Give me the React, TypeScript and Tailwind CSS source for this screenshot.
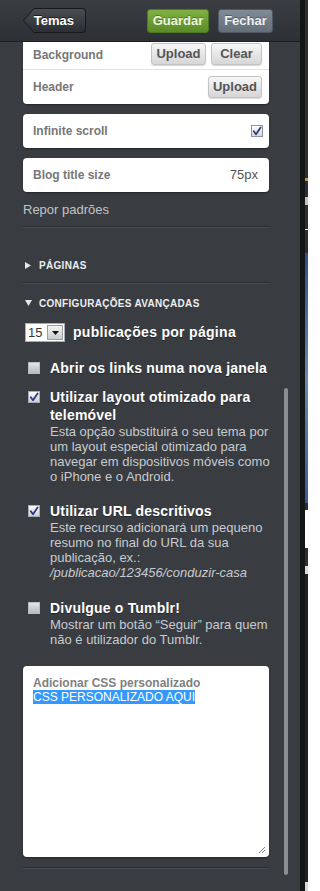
import type { ReactNode } from 'react';

// ─── Shared bits ───────────────────────────────────────────────────────────────

const FONT = "font-['Liberation_Sans',Arial,sans-serif]";

function cx(...parts: (string | false | undefined)[]) {
  return parts.filter(Boolean).join(' ');
}

function Checkbox({ checked, light }: { checked?: boolean; light?: boolean }) {
  return (
    <span
      className={cx(
        'flex h-[12px] w-[12px] shrink-0 items-center justify-center border',
        light
          ? 'border-[#8e949a] bg-gradient-to-b from-[#ffffff] to-[#d5d8dc]'
          : checked
            ? 'border-[#a7abb0] bg-gradient-to-b from-[#fdfdfd] to-[#cdd0d4]'
            : 'border-[#b9bcc0] bg-gradient-to-b from-[#e4e5e7] to-[#b8bbbf]',
      )}
    >
      {checked && (
        <svg width="10" height="10" viewBox="0 0 10 10" aria-hidden="true">
          <path
            d="M1.8 5.2 L4 8.2 L8.6 1.4"
            fill="none"
            stroke="#2d3b86"
            strokeWidth="1.8"
            strokeLinecap="round"
            strokeLinejoin="round"
          />
        </svg>
      )}
    </span>
  );
}

function GrayButton({ children, width }: { children: ReactNode; width: string }) {
  return (
    <button
      className={cx(
        'flex h-[22px] items-center justify-center rounded-[3px] border border-[#c3c3c3] bg-gradient-to-b from-[#f8f8f8] to-[#d6d6d6] text-[13px] font-bold text-[#555] shadow-[0_1px_1px_rgba(0,0,0,0.15)]',
        width,
      )}
    >
      {children}
    </button>
  );
}

function Divider({ className }: { className?: string }) {
  return <div className={cx('h-[2px] border-t border-b border-t-[#2a2d31] border-b-[#4a4e54]', className)} />;
}

function Option({
  checked,
  title,
  children,
  className,
}: {
  checked?: boolean;
  title: ReactNode;
  children?: ReactNode;
  className?: string;
}) {
  return (
    <div className={cx('flex gap-[10px] pl-[5px]', className)}>
      <div className="pt-[3px]">
        <Checkbox checked={checked} />
      </div>
      <div className="min-w-0 flex-1">
        <p className="text-[14px] font-bold leading-[18px] tracking-[0.2px] text-white [text-shadow:0_1px_0_rgba(0,0,0,0.4)]">
          {title}
        </p>
        {children && (
          <p className="whitespace-nowrap text-[13px] leading-[15px] text-[#c7cbcf]">{children}</p>
        )}
      </div>
    </div>
  );
}

// ─── Header ────────────────────────────────────────────────────────────────────

function Header() {
  return (
    <header className="flex h-[42px] shrink-0 items-center rounded-tl-[4px] border-b border-[#1d1f22] bg-gradient-to-b from-[#3a3d42] to-[#2d3034] pl-[23px] pr-[27px]">
      <div className="flex h-[25px] w-[63px] rounded-r-[4px] bg-[#17191b] [clip-path:polygon(11px_0,100%_0,100%_100%,11px_100%,0_50%)]">
        <div className="m-[1px] flex flex-1 items-center justify-end rounded-r-[3px] bg-gradient-to-b from-[#4a4e54] to-[#2b2e32] pr-[11px] text-[13px] font-bold text-white [clip-path:polygon(10px_0,100%_0,100%_100%,10px_100%,0_50%)] [text-shadow:0_-1px_0_rgba(0,0,0,0.6)]">
          Temas
        </div>
      </div>
      <div className="flex-1" />
      <button className="flex h-[24px] w-[62px] items-center justify-center rounded-[3px] border border-[#4d7a22] bg-gradient-to-b from-[#7fb142] to-[#5b8b27] text-[13px] font-bold text-[#eef6e2] [text-shadow:0_-1px_0_rgba(0,0,0,0.3)]">
        Guardar
      </button>
      <button className="ml-[9px] flex h-[24px] w-[55px] items-center justify-center rounded-[3px] border border-[#4f5861] bg-gradient-to-b from-[#808b95] to-[#636e78] text-[13px] font-bold text-[#eef1f4] [text-shadow:0_-1px_0_rgba(0,0,0,0.3)]">
        Fechar
      </button>
    </header>
  );
}

// ─── Settings column ───────────────────────────────────────────────────────────

function Settings() {
  return (
    <div className="ml-[23px] w-[246px] shrink-0">
      {/* Images card (top clipped by the header) */}
      <div className="rounded-b-[4px] bg-white shadow-[0_1px_2px_rgba(0,0,0,0.4)]">
        <div className="flex h-[28px] items-start justify-between border-b border-[#e3e3e3] pl-[10px] pr-[7px] pt-[1px]">
          <span className="mt-[3px] text-[12px] font-bold text-[#777]">Background</span>
          <div className="flex gap-[5px]">
            <GrayButton width="w-[55px]">Upload</GrayButton>
            <GrayButton width="w-[51px]">Clear</GrayButton>
          </div>
        </div>
        <div className="flex h-[34px] items-center justify-between pl-[10px] pr-[7px]">
          <span className="text-[12px] font-bold text-[#777]">Header</span>
          <GrayButton width="w-[54px]">Upload</GrayButton>
        </div>
      </div>

      <div className="mt-[10px] flex h-[34px] items-center justify-between rounded-[4px] bg-white pl-[10px] pr-[6px] shadow-[0_1px_2px_rgba(0,0,0,0.4)]">
        <span className="text-[12px] font-bold text-[#777]">Infinite scroll</span>
        <Checkbox checked light />
      </div>

      <div className="mt-[10px] flex h-[34px] items-center justify-between rounded-[4px] bg-white pl-[10px] pr-[11px] shadow-[0_1px_2px_rgba(0,0,0,0.4)]">
        <span className="text-[12px] font-bold text-[#777]">Blog title size</span>
        <span className="text-[13px] text-[#555]">75px</span>
      </div>

      <p className="mt-[10px] text-[13px] leading-[16px] text-[#c0c4c8]">Repor padrões</p>

      <Divider className="mt-[8px]" />

      <div className="mt-[29px] flex h-[16px] items-center gap-[8px] pl-[2px]">
        <svg width="6" height="7" viewBox="0 0 6 7" aria-hidden="true">
          <path d="M0 0 L6 3.5 L0 7 Z" fill="#e6e8ea" />
        </svg>
        <span className="text-[10px] font-bold tracking-[0.3px] text-[#eceef0]">PÁGINAS</span>
      </div>

      <Divider className="mt-[9px]" />

      <div className="mt-[12px] flex h-[14px] items-center gap-[7px] pl-[2px]">
        <svg width="7" height="6" viewBox="0 0 7 6" aria-hidden="true">
          <path d="M0 0 L7 0 L3.5 6 Z" fill="#e6e8ea" />
        </svg>
        <span className="text-[10px] font-bold tracking-[0.3px] text-[#eceef0]">CONFIGURAÇÕES AVANÇADAS</span>
      </div>

      <div className="mt-[13px] flex h-[19px] items-center gap-[8px] pl-[2px]">
        <div className="flex h-[19px] w-[40px] items-center border border-[#a9acb0] bg-white">
          <span className="w-[21px] pl-[2px] text-[13px] text-[#333]">15</span>
          <span className="flex h-[15px] w-[16px] items-center justify-center border border-[#9a9da1] bg-gradient-to-b from-[#f4f4f4] to-[#c9cbce]">
            <svg width="7" height="4" viewBox="0 0 7 4" aria-hidden="true">
              <path d="M0 0 L7 0 L3.5 4 Z" fill="#111" />
            </svg>
          </span>
        </div>
        <span className="text-[14px] font-bold tracking-[0.3px] text-white [text-shadow:0_1px_0_rgba(0,0,0,0.4)]">
          publicações por página
        </span>
      </div>

      <Option className="mt-[17px]" title="Abrir os links numa nova janela" />

      <Option className="mt-[11px]" checked title={<>Utilizar layout otimizado para<br />telemóvel</>}>
        Esta opção substituirá o seu tema por
        <br />
        um layout especial otimizado para
        <br />
        navegar em dispositivos móveis como
        <br />o iPhone e o Android.
      </Option>

      <Option className="mt-[18px]" checked title="Utilizar URL descritivos">
        Este recurso adicionará um pequeno
        <br />
        resumo no final do URL da sua
        <br />
        publicação, ex.:
        <br />
        <em>/publicacao/123456/conduzir-casa</em>
      </Option>

      <Option className="mt-[19px]" title="Divulgue o Tumblr!">
        Mostrar um botão “Seguir” para quem
        <br />
        não é utilizador do Tumblr.
      </Option>

      {/* Custom CSS */}
      <div className="relative mt-[19px] h-[191px] rounded-[4px] bg-white px-[10px] pt-[10px] shadow-[0_1px_2px_rgba(0,0,0,0.4)]">
        <p className="text-[12px] font-bold leading-[15px] text-[#808080]">Adicionar CSS personalizado</p>
        <p className="text-[12px] leading-[13px]">
          <span className="bg-[#3399ff] text-white">CSS PERSONALIZADO AQUI</span>
        </p>
        <svg className="absolute bottom-[3px] right-[3px]" width="9" height="9" viewBox="0 0 9 9" aria-hidden="true">
          <path d="M8 2 L2 8 M8 5 L5 8" stroke="#888" strokeWidth="1" />
        </svg>
      </div>

      <Divider className="mt-[10px]" />
    </div>
  );
}

// ─── Preview sliver ────────────────────────────────────────────────────────────

function PreviewSliver() {
  return (
    <div className="flex w-[3px] flex-col bg-[#2c2e32]">
      <div className="h-[178px]" />
      <div className="h-[3px] bg-[#d28a3c]" />
      <div className="h-[16px]" />
      <div className="h-[8px] bg-[#bfc2c5]" />
      <div className="h-[24px]" />
      <div className="h-[1px] bg-[#e2e2e2]" />
      <div className="h-[23px]" />
      <div className="h-[250px] bg-gradient-to-b from-[#324f86] via-[#6c86ad] to-[#3a5a92]" />
      <div className="h-[7px]" />
      <div className="h-[38px] bg-white" />
      <div className="h-[18px]" />
      <div className="h-[8px] bg-[#d8dadc]" />
      <div className="flex-1 bg-[#1f2124]" />
      <div className="h-[9px] bg-[#d9d9d9]" />
    </div>
  );
}

// ─── App ───────────────────────────────────────────────────────────────────────

export default function App() {
  return (
    <div className={cx('flex h-[891px] w-[308px] overflow-hidden bg-[#1f2124]', FONT)}>
      <aside className="flex w-[300px] flex-col bg-[#393c41]">
        <Header />
        <div className="flex flex-1 overflow-hidden">
          <Settings />
          <div className="ml-[15px] flex w-[4px] flex-col">
            <div className="h-[346px]" />
            <div className="h-[487px] rounded-full bg-[#8a8d91]" />
          </div>
        </div>
      </aside>
      <div className="w-[5px] bg-[#141517]" />
      <PreviewSliver />
    </div>
  );
}
